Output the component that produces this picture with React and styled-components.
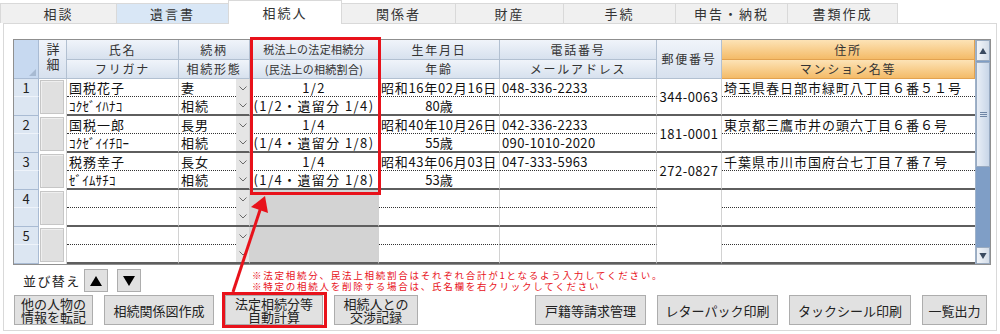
import React from 'react';
import styled, { createGlobalStyle } from 'styled-components';

const RED = '#e8121b';
const COLS = '25px 28px 112px 57px 14px 129px 121px 157px 65px 253px';

const GlobalStyle = createGlobalStyle`
  html, body { margin: 0; padding: 0; background: #fff; }
  body { font-family: "Noto Sans CJK JP", "Noto Sans", sans-serif; color: #222; }
  * { box-sizing: border-box; }
`;

const Page = styled.div`
  position: relative;
  width: 1000px;
  height: 334px;
  overflow: hidden;
  background: #fff;
`;

const TabBar = styled.div`
  display: flex;
  align-items: flex-end;
  height: 23px;
  position: relative;
  z-index: 2;
`;

const Tab = styled.div`
  flex: none;
  width: ${p => p.$w}px;
  height: ${p => (p.$active ? 24 : 20)}px;
  margin-bottom: ${p => (p.$active ? -1 : 0)}px;
  margin-right: -1px;
  display: flex;
  align-items: center;
  justify-content: center;
  font-size: 13px;
  letter-spacing: 2px;
  color: #333;
  background: ${p => (p.$active ? '#fff' : p.$hover ? '#d9e7f6' : '#f0f0f0')};
  border: 1px solid #d9d9d9;
  border-bottom: none;
  line-height: 1;
`;

const Panel = styled.div`
  margin-left: 3px;
  width: 994px;
  height: 308px;
  border: 1px solid #d9d9d9;
  background: #fff;
  padding: 15px 8px 0 9px;
  display: flex;
  flex-direction: column;
`;

const Frame = styled.div`
  flex: none;
  display: flex;
  width: 978px;
  height: 226px;
  border: 1px solid #8f8f8f;
`;

const GridArea = styled.div`
  width: 961px;
  display: flex;
  flex-direction: column;
`;

const HeadGrid = styled.div`
  display: grid;
  grid-template-columns: ${COLS};
  grid-template-rows: 20px 19px;
`;

const HeadCell = styled.div`
  grid-column: ${p => p.$col};
  grid-row: ${p => p.$row};
  display: flex;
  align-items: center;
  justify-content: center;
  background: ${p => (p.$orange ? 'linear-gradient(#fde3b6, #f4bb68)' : 'linear-gradient(#f0f4fa, #d7e1ee)')};
  border-right: 1px solid ${p => (p.$orange ? '#e2a250' : '#b2c0d1')};
  border-bottom: 1px solid ${p => (p.$orange ? '#e2a250' : '#b2c0d1')};
  font-size: ${p => (p.$small ? '11px' : '12px')};
  letter-spacing: ${p => (p.$small ? '0.3px' : '1.8px')};
  color: #333;
  line-height: 1;
  white-space: nowrap;
`;

const Corner = styled.div`
  grid-column: 1;
  grid-row: 1 / 3;
  position: relative;
  background: #c7d9f0;
  border-right: 1px solid #a9bbd3;
  border-bottom: 1px solid #a9bbd3;
  &::after {
    content: '';
    position: absolute;
    right: 2px;
    bottom: 2px;
    border-style: solid;
    border-width: 0 0 7px 7px;
    border-color: transparent transparent #a7bad2 transparent;
  }
`;

const StackLabel = styled.div`
  grid-column: 2;
  grid-row: 1 / 3;
  display: flex;
  justify-content: center;
  align-items: flex-start;
  padding-top: 3px;
  background: linear-gradient(#f0f4fa, #d7e1ee);
  border-right: 1px solid #b2c0d1;
  border-bottom: 1px solid #b2c0d1;
`;

const VerticalText = styled.span`
  display: inline-block;
  writing-mode: vertical-rl;
  text-orientation: upright;
  font-size: 13px;
  line-height: 14px;
  letter-spacing: 2px;
  color: #333;
`;

const RecordGrid = styled.div`
  display: grid;
  grid-template-columns: ${COLS};
  grid-template-rows: 18px 19px;
`;

const RowNum = styled.div`
  display: flex;
  align-items: center;
  justify-content: center;
  font-size: 13px;
  line-height: 1;
  color: #222;
  background: #dce6f2;
  border-right: 1px solid #a9bbd3;
  border-bottom: 1px solid ${p => (p.$end ? '#a9bbd3' : '#eef3fa')};
`;

const DetailCell = styled.div`
  grid-row: span 2;
  padding: 1px 2px 2px 1px;
  border-right: 1px solid #d2d2d2;
  background: #fff;
`;

const DetailBtn = styled.div`
  height: 100%;
  background: #e0e0e0;
  border: 1px solid #c6c6c6;
  box-shadow: inset 1px 1px 0 #efefef;
`;

const Cell = styled.div`
  grid-row: ${p => (p.$span ? 'span 2' : 'auto')};
  display: flex;
  align-items: center;
  justify-content: ${p => (p.$center ? 'center' : 'flex-start')};
  padding-left: ${p => (p.$center ? 0 : 2)}px;
  font-size: 13px;
  line-height: 1;
  white-space: nowrap;
  overflow: hidden;
  color: #111;
  letter-spacing: ${p => p.$ls || 0}px;
  background: ${p => (p.$gray ? '#d3d3d3' : '#fff')};
  border-right: ${p => (p.$noRight ? 'none' : '1px solid #d2d2d2')};
  border-bottom: ${p =>
    p.$line === 'dot' ? '1px dotted #333' : p.$line === 'solid' ? '2px solid #5e5e5e' : 'none'};
`;

const ArrowCell = styled.div`
  display: flex;
  align-items: center;
  justify-content: center;
  background: #e5e5e5;
  border-right: 1px solid #d2d2d2;
  border-bottom: ${p => (p.$line === 'solid' ? '2px solid #5e5e5e' : 'none')};
`;

const Scroll = styled.div`
  width: 15px;
  display: flex;
  flex-direction: column;
  background: #7f9ec6;
  border-left: 1px solid #9fb2c9;
`;

const ScrollBtn = styled.div`
  height: ${p => p.$h}px;
  flex: none;
  display: flex;
  align-items: center;
  justify-content: center;
  background: linear-gradient(90deg, #f2f5f9, #d4dde9);
  border: 1px solid #9aabc0;
`;

const Thumb = styled.div`
  height: 105px;
  flex: none;
  margin-top: 1px;
  display: flex;
  align-items: center;
  justify-content: center;
  background: linear-gradient(90deg, #e8eef6, #c8d6e8);
  border: 1px solid #98aac1;
`;

const Track = styled.div`
  flex: 1;
`;

const SortRow = styled.div`
  display: flex;
  align-items: center;
  height: 23px;
  margin-top: 4px;
  padding-left: 10px;
`;

const SortLabel = styled.span`
  font-size: 13px;
  letter-spacing: 1.4px;
  color: #222;
  line-height: 1;
  width: 61px;
`;

const SortBtn = styled.div`
  width: 24px;
  height: 23px;
  margin-left: ${p => p.$ml}px;
  display: flex;
  align-items: center;
  justify-content: center;
  background: #e1e1e1;
  border: 1px solid #adadad;
`;

const Notes = styled.div`
  align-self: flex-start;
  margin-left: 111px;
  margin-top: 1px;
  display: flex;
  flex-direction: column;
  color: ${RED};
  font-size: 9.5px;
  letter-spacing: 1.75px;
  white-space: nowrap;
`;

const NoteLine = styled.span`
  display: block;
  height: 11px;
  line-height: 11px;
`;

const ButtonRow = styled.div`
  display: flex;
  justify-content: space-between;
  margin-top: 3px;
  padding: 0 1px;
`;

const Group = styled.div`
  display: flex;
  gap: ${p => p.$gap}px;
`;

const Btn = styled.div`
  position: relative;
  width: ${p => p.$w}px;
  height: 30px;
  display: flex;
  align-items: center;
  justify-content: center;
  text-align: center;
  background: #e1e1e1;
  border: 1px solid #adadad;
  font-size: 13px;
  line-height: 13px;
  color: #222;
  white-space: pre-line;
  ${p =>
    p.$mark &&
    `&::after {
      content: '';
      position: absolute;
      left: -4px; right: -5px; top: -4px; bottom: -4px;
      border: 3px solid ${RED};
    }`}
`;

const TaxMark = styled.div`
  position: absolute;
  left: 250px;
  top: 37px;
  width: 131px;
  height: 158px;
  border: 3px solid ${RED};
  pointer-events: none;
`;

const Overlay = styled.svg`
  position: absolute;
  left: 0;
  top: 0;
  pointer-events: none;
`;

const tabs = [
  { t: '相談', w: 117 },
  { t: '遺言書', w: 113, hover: true },
  { t: '相続人', w: 114, active: true },
  { t: '関係者', w: 115 },
  { t: '財産', w: 109 },
  { t: '手続', w: 113 },
  { t: '申告・納税', w: 113 },
  { t: '書類作成', w: 111 },
];

const records = [
  { n: 1, name: '国税花子', kana: 'ｺｸｾﾞｲﾊﾅｺ', rel: '妻', type: '相続', share: '1/2', civil: '(1/2・遺留分 1/4)', birth: '昭和16年02月16日', age: '80歳', tel: '048-336-2233', mail: '', zip: '344-0063', addr: '埼玉県春日部市緑町八丁目６番５１号' },
  { n: 2, name: '国税一郎', kana: 'ｺｸｾﾞｲｲﾁﾛｰ', rel: '長男', type: '相続', share: '1/4', civil: '(1/4・遺留分 1/8)', birth: '昭和40年10月26日', age: '55歳', tel: '042-336-2233', mail: '090-1010-2020', zip: '181-0001', addr: '東京都三鷹市井の頭六丁目６番６号' },
  { n: 3, name: '税務幸子', kana: 'ｾﾞｲﾑｻﾁｺ', rel: '長女', type: '相続', share: '1/4', civil: '(1/4・遺留分 1/8)', birth: '昭和43年06月03日', age: '53歳', tel: '047-333-5963', mail: '', zip: '272-0827', addr: '千葉県市川市国府台七丁目７番７号' },
  { n: 4, empty: true },
  { n: 5, empty: true },
];

const Chevron = () => (
  <svg width="8" height="5" viewBox="0 0 8 5">
    <path d="M0.5 0.5 L4 4 L7.5 0.5" fill="none" stroke="#6a6a6a" strokeWidth="1" />
  </svg>
);

const Tri = ({ up, size = 12, color = '#000' }) => (
  <svg width={size} height={size - 2} viewBox="0 0 12 10">
    {up ? <polygon points="6,0 12,10 0,10" fill={color} /> : <polygon points="0,0 12,0 6,10" fill={color} />}
  </svg>
);

const Record = ({ r }) => (
  <RecordGrid>
    <RowNum>{r.n}</RowNum>
    <DetailCell><DetailBtn /></DetailCell>
    <Cell $line="dot" $ls={1}>{r.name}</Cell>
    <Cell $line="dot" $noRight $ls={1}>{r.rel}</Cell>
    <ArrowCell><Chevron /></ArrowCell>
    {r.empty ? <Cell $gray /> : <Cell $line="dot" $center $ls={1.4}>{r.share}</Cell>}
    <Cell $line="dot" $ls={0.7}>{r.birth}</Cell>
    <Cell $line="dot" $ls={0.4}>{r.tel}</Cell>
    <Cell $span $center $line="solid" $ls={0.5}>{r.zip}</Cell>
    <Cell $line="dot" $noRight $ls={1}>{r.addr}</Cell>

    <RowNum $end />
    <Cell $line="solid" $ls={0.2}>{r.kana}</Cell>
    <Cell $line="solid" $noRight $ls={1}>{r.type}</Cell>
    <ArrowCell $line="solid"><Chevron /></ArrowCell>
    {r.empty ? <Cell $gray $line="solid" /> : <Cell $line="solid" $center $ls={1.4}>{r.civil}</Cell>}
    <Cell $line="solid" $center>{r.age}</Cell>
    <Cell $line="solid" $ls={0.4}>{r.mail}</Cell>
    <Cell $line="solid" $noRight $ls={1}>{r.addr2}</Cell>
  </RecordGrid>
);

export default function App() {
  return (
    <Page>
      <GlobalStyle />
      <TabBar>
        {tabs.map(t => (
          <Tab key={t.t} $w={t.w} $active={t.active} $hover={t.hover}>{t.t}</Tab>
        ))}
      </TabBar>
      <Panel>
        <Frame>
          <GridArea>
            <HeadGrid>
              <Corner />
              <StackLabel><VerticalText>詳細</VerticalText></StackLabel>
              <HeadCell $col="3" $row="1">氏名</HeadCell>
              <HeadCell $col="3" $row="2">フリガナ</HeadCell>
              <HeadCell $col="4 / 6" $row="1">続柄</HeadCell>
              <HeadCell $col="4 / 6" $row="2">相続形態</HeadCell>
              <HeadCell $col="6" $row="1" $small>税法上の法定相続分</HeadCell>
              <HeadCell $col="6" $row="2" $small>(民法上の相続割合)</HeadCell>
              <HeadCell $col="7" $row="1">生年月日</HeadCell>
              <HeadCell $col="7" $row="2">年齢</HeadCell>
              <HeadCell $col="8" $row="1">電話番号</HeadCell>
              <HeadCell $col="8" $row="2">メールアドレス</HeadCell>
              <HeadCell $col="9" $row="1 / 3">郵便番号</HeadCell>
              <HeadCell $col="10" $row="1" $orange>住所</HeadCell>
              <HeadCell $col="10" $row="2" $orange>マンション名等</HeadCell>
            </HeadGrid>
            {records.map(r => <Record key={r.n} r={r} />)}
          </GridArea>
          <Scroll>
            <ScrollBtn $h={21}><Tri up size={8} color="#3a4a60" /></ScrollBtn>
            <Thumb>
              <svg width="7" height="6" viewBox="0 0 7 6">
                <path d="M0 0.5H7M0 2.5H7M0 4.5H7" stroke="#6f86a6" strokeWidth="1" />
              </svg>
            </Thumb>
            <Track />
            <ScrollBtn $h={17}><Tri size={8} color="#3a4a60" /></ScrollBtn>
          </Scroll>
        </Frame>
        <SortRow>
          <SortLabel>並び替え</SortLabel>
          <SortBtn $ml={0}><Tri up /></SortBtn>
          <SortBtn $ml={9}><Tri /></SortBtn>
          <Notes>
            <NoteLine>※法定相続分、民法上相続割合はそれぞれ合計が1となるよう入力してください。</NoteLine>
            <NoteLine>※特定の相続人を削除する場合は、氏名欄を右クリックしてください</NoteLine>
          </Notes>
        </SortRow>
        <ButtonRow>
          <Group $gap={11}>
            <Btn $w={79}>{'他の人物の\n情報を転記'}</Btn>
            <Btn $w={110}>相続関係図作成</Btn>
            <Btn $w={98} $mark>{'法定相続分等\n自動計算'}</Btn>
            <Btn $w={84}>{'相続人との\n交渉記録'}</Btn>
          </Group>
          <Group $gap={11}>
            <Btn $w={111}>戸籍等請求管理</Btn>
            <Btn $w={121}>レターパック印刷</Btn>
            <Btn $w={122}>タックシール印刷</Btn>
            <Btn $w={65}>一覧出力</Btn>
          </Group>
        </ButtonRow>
      </Panel>
      <TaxMark />
      <Overlay width="1000" height="334" viewBox="0 0 1000 334">
        <line x1="233" y1="292" x2="261" y2="207" stroke={RED} strokeWidth="3" />
        <polygon points="265,196 251,207 268,213" fill={RED} />
      </Overlay>
    </Page>
  );
}
